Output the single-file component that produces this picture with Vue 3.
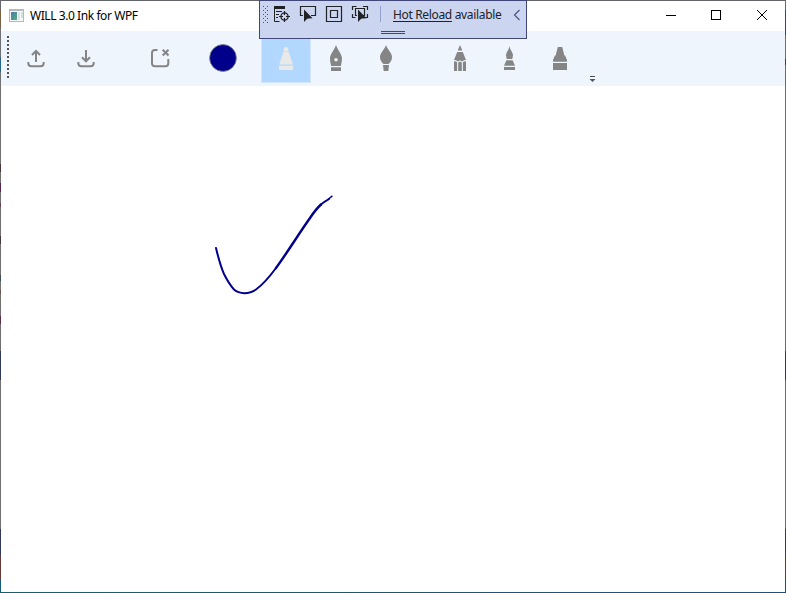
<script setup>
const fileTools = [
  { name: 'upload', d: 'M25 27V16M21 20l4-4 4 4M17.3 27v1q0 3.2 3.2 3.2h9q3.2 0 3.2-3.2v-1' },
  { name: 'download', d: 'M25 15v11M21 22.3l4 4 4-4M17.3 27v1q0 3.2 3.2 3.2h9q3.2 0 3.2-3.2v-1' }
]
const vectorPens = [
  { name: 'felt', active: true, d: 'M22.7 16v-2q0-2 2.3-2t2.3 2v2zM22.5 16.4h5L32 29.6H18.2zM18 30.8h14V35H18z' },
  { name: 'fountain', d: 'M25 10C26.5 15 31 19 31 23.5Q31 27 29.8 31H20.2Q19 27 19 23.5C19 19 23.5 15 25 10zM25 23a1.8 1.8 0 1 0 0 3.6 1.8 1.8 0 0 0 0-3.6zM20 32.2h10V36H20z' },
  { name: 'brush', d: 'M25 10C26.5 14.5 31 18 31 22Q31 26 27.5 29h-5Q19 26 19 22C19 18 23.5 14.5 25 10zM22 30h6l-.7 6h-4.6z' }
]
const rasterPens = [
  { name: 'pencil', d: 'M25 10l2.3 5.5h-4.6zM22.2 17h5.6L31 25l-2 .2-2 1.3-2-1.3-2 1.3-2-1.3-2-.2zM19 26.7l1.5-.5 1.6 1V36H19zM23.2 27.4l1.8-1 1.8 1V36h-3.6zM27.9 27.2l1.6-1 1.5.5V36h-3.1z' },
  { name: 'water-brush', d: 'M24.5 11C25 15 28 17.5 28 20.3L27.3 24h-5.6L21 20.3C21 17.5 24 15 24.5 11zM21.4 25.2h6.2L30 30.7H19zM19 32h11v3H19z' },
  { name: 'crayon', d: 'M22.8 12h4.4L29 19v1.3h1L32 25v1.7H18V25l2-4.7h1V19zM18 28h14v7H18z' }
]
</script>

<template>
  <div class="window">
    <header class="titlebar">
      <svg class="app-icon" width="15" height="13" viewBox="0 0 15 13">
        <defs>
          <linearGradient id="pane" x1="0" y1="0" x2="1" y2="1">
            <stop offset="0" stop-color="#4d79ae" /><stop offset="1" stop-color="#4fae77" />
          </linearGradient>
        </defs>
        <path d="M0 0h15v13H0z" fill="#b4b9bd" />
        <path d="M1 2h13v10H1z" fill="#f7f8f9" />
        <path d="M2 3h6v8H2z" fill="url(#pane)" />
        <path d="M9 3h2v8H9z" fill="#dce1ea" /><path d="M12 3h2v6h-2z" fill="#d0dfd8" />
      </svg>
      <span class="title">WILL 3.0 Ink for WPF</span>
      <svg class="controls" width="137" height="30" viewBox="0 0 137 30" fill="none" stroke="#000">
        <path d="M18 14.5h10M63.5 9.5h9v9h-9z" shape-rendering="crispEdges" />
        <path d="M109 9l10 10M119 9l-10 10" />
      </svg>
    </header>

    <nav class="toolbar">
      <span class="grip"></span>
      <svg v-for="t in fileTools" :key="t.name" class="tool line" viewBox="0 0 50 48"><path :d="t.d" /></svg>
      <svg class="tool line group" viewBox="0 0 50 48">
        <path d="M22.500 15H20q-3 0-3 3v10.300q0 3 3 3h10.300q3 0 3-3V24" />
        <path d="M27.700 14.700l5.800 5.800M33.500 14.700l-5.800 5.800" />
      </svg>
      <svg class="tool color" viewBox="0 0 50 48">
        <circle cx="25" cy="23" r="13.400" fill="#00008b" stroke="#858585" stroke-width=".8" />
      </svg>
      <svg v-for="p in vectorPens" :key="p.name" class="tool pen" :class="{ active: p.active }" viewBox="0 0 50 48">
        <path :d="p.d" fill-rule="evenodd" />
      </svg>
      <span class="gap"></span>
      <svg v-for="p in rasterPens" :key="p.name" class="tool pen" viewBox="0 0 50 48"><path :d="p.d" /></svg>
      <svg class="overflow" width="9" height="9" viewBox="0 0 9 9">
        <path d="M3 1h5v1H3z" fill="#444" /><path d="M2.500 4h6l-3 3z" fill="#555" />
        <path d="M3 2h5v1H3z" fill="#fff" />
      </svg>
    </nav>

    <main class="canvas">
      <svg width="784" height="506" viewBox="1 86 784 506" fill="none" stroke="#00008b" stroke-linecap="round" stroke-linejoin="round">
        <path stroke-width="2" d="M216 248C218 256 220 265 224 274Q229 284 234 289.500Q238 293 244.500 293.200Q251 293 256 289.500Q265 283 276 268" />
        <path stroke-width="2.400" d="M276 268C287 253 298 235 310 218Q316 209 321 204.500" />
        <path stroke-width="2" d="M320.500 205Q323 202.500 329 199" />
        <path stroke-width="1.500" d="M328 199.500L332 196.200" />
      </svg>
    </main>

    <aside class="debug-bar">
      <svg class="debug-icons" width="122" height="37" viewBox="260 1 122 37" fill="none" stroke="#202225">
        <defs>
          <pattern id="dots" x="263" y="6" width="4" height="4" patternUnits="userSpaceOnUse">
            <path d="M0 0h1v1H0zM2 2h1v1H2z" fill="#4c5480" stroke="none" />
          </pattern>
        </defs>
        <path d="M263 6h6v17h-6z" fill="url(#dots)" stroke="none" />
        <path d="M274 6h11v3h-11z" fill="#202225" stroke="none" />
        <path d="M274.500 8v13.500h5M276 11.500h6M276 14.500h3M276 17.500h2" />
        <circle cx="284.500" cy="16.500" r="3.600" stroke-width="1.300" />
        <path d="M284.500 11v4M284.500 18v4M279 16.500h4M286 16.500h4" stroke-width="1.200" />
        <path d="M303 15.500h-2.500v-9h15v9H311" stroke-width="1.200" />
        <path d="M304 9.500v12.500l3.200-3.200 1.600-.2 3.700-.4z" fill="#202225" stroke="none" />
        <path d="M326.500 6.500h15v15h-15zM330.500 10.500h7v7h-7z" stroke-width="1.200" />
        <path d="M352.500 10V6.500h4M363 6.500h4.500V10M352.500 14v3.500h3M367.500 14v3.500H364M357 15.500h-1.500v-7h9v7H363" stroke-width="1.200" />
        <path d="M358 9.500v12.500l3.200-3.200 1.600-.2 3.700-.4z" fill="#202225" stroke="none" />
        <path d="M380.500 6v16" stroke="#92a0cc" />
      </svg>
      <span class="status"><u>Hot Reload</u> available</span>
      <svg class="chevron" width="8" height="12" viewBox="0 0 8 12"><path d="M6.500 1L1.500 6l5 5" fill="none" stroke="#4b5480" stroke-width="1.200" /></svg>
      <span class="handle"></span>
    </aside>
  </div>
</template>

<style>
body { margin: 0; overflow: hidden; }
</style>

<style scoped>
.window {
  position: relative;
  box-sizing: border-box;
  width: 786px;
  height: 593px;
  padding: 1px;
  display: flex;
  flex-direction: column;
  font-family: "Noto Sans", "Open Sans", sans-serif;
  font-size: 12px;
  background:
    linear-gradient(90deg, #175c76, #1d4f7b) 0 100% / 100% 1px no-repeat,
    linear-gradient(#62646b, #62646b) 0 0 / 100% 1px no-repeat,
    linear-gradient(#66676d 10px, #786143 10px 28px, #6f7074 28px 57px, #24628a 57px 72px, #707070 72px 164px, #44372f 164px 172px, #707070 172px 183px, #572650 183px 192px, #707070 192px 203px, #65414a 203px 207px, #707070 207px 236px, #443b38 236px 244px, #707070 244px 275px, #374f50 275px 281px, #707070 281px 290px, #725444 290px 294px, #707070 294px 316px, #562f49 316px 324px, #707070 324px 351px, #303957 351px 380px, #707070 380px 529px, #303957 529px 555px, #663a37 555px 580px, #175c76 580px) 0 0 / 1px 100% no-repeat,
    linear-gradient(#66676d 10px, #364666 10px 35px, #756d5b 35px 59px, #4b303b 59px 65px, #6c6c6c 65px 351px, #303746 351px 380px, #6c6c6c 380px 529px, #343d52 529px 557px, #5c3a39 557px 579px, #1d4f7b 579px) 100% 0 / 1px 100% no-repeat;
}
.titlebar {
  display: flex;
  align-items: center;
  height: 30px;
  padding-left: 8px;
  background: #fff;
}
.app-icon { margin-top: -2px; }
.title {
  margin: -1px 0 0 6px;
  color: #000;
  letter-spacing: -0.43px;
  white-space: nowrap;
}
.controls { margin-left: auto; }
.toolbar {
  display: flex;
  height: 51px;
  padding: 4px 0 0 6px;
  background: #eef5fd;
}
.grip {
  width: 2px;
  height: 43px;
  margin: 1px 2px 0 0;
  background: repeating-linear-gradient(#555 0 2px, transparent 2px 4px);
}
.tool {
  box-sizing: border-box;
  flex: none;
  width: 50px;
  height: 48px;
}
.line {
  fill: none;
  stroke: #858585;
  stroke-width: 2;
}
.group { margin-left: 24px; }
.color { margin: 0 13px; }
.pen { fill: #858585; }
.pen.active {
  fill: #e9e9e9;
  background: #b2d8ff;
  box-shadow: inset 0 0 0 1px #d3e5f8;
}
.gap { width: 24px; }
.overflow { margin: 40px 0 0 2px; }
.canvas { flex: 1; background: #fff; }
.canvas svg { display: block; }
.debug-bar {
  position: absolute;
  top: 0;
  left: 259px;
  box-sizing: border-box;
  display: flex;
  width: 268px;
  height: 39px;
  border: 1px solid #404778;
  background: #ccd5f0;
}
.debug-icons { flex: none; }
.status {
  width: 109px;
  margin: 5px 0 0 11px;
  color: #202225;
  line-height: 18px;
  letter-spacing: -0.34px;
  white-space: nowrap;
}
.status u { text-underline-offset: 2px; text-decoration-thickness: 1px; }
.chevron { margin: 8px 0 0 11px; }
.handle {
  position: absolute;
  top: 30px;
  left: 121px;
  box-sizing: border-box;
  width: 24px;
  height: 3px;
  border: solid #404778;
  border-width: 1px 0;
}
</style>
